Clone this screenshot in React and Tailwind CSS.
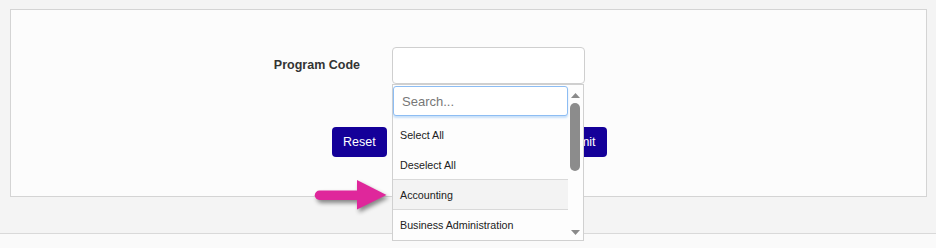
import React from 'react';

const options = [
  { label: 'Select All', h: 'h-[30px]' },
  { label: 'Deselect All', h: 'h-[31px] border-b border-[#d9d9d9]' },
  { label: 'Accounting', h: 'h-[30px] border-b border-[#d9d9d9] bg-[#f3f3f3]' },
  { label: 'Business Administration', h: 'h-[29px]' },
];

export default function App() {
  return (
    <div className="relative w-[936px] h-[248px] overflow-hidden bg-[#f4f4f4] font-['Liberation_Sans',Arial,sans-serif] text-[#333]">
      <div className="pt-[9px] pl-[10px]">
        {/* Form panel */}
        <div className="w-[917px] h-[188px] border border-[#d4d4d4] bg-[#fcfcfc]">
          <div className="flex items-center pt-[37px]">
            <label className="ml-[229px] w-[120px] text-right text-[12.5px] font-bold">Program Code</label>
            <div className="relative ml-[32px]">
              <div className="w-[193px] h-[37px] border border-[#cfcfcf] rounded-[4px] bg-white" />

              {/* Dropdown */}
              <div className="absolute left-0 top-full z-10 flex w-[192px] h-[157px] border border-[#d0d0d0] bg-[#fdfdfd]">
                <div className="w-[175px] pt-[1px]">
                  <input
                    placeholder="Search..."
                    className="block w-[175px] h-[30px] px-[8px] rounded-[3px] border border-[#8dbdf3] bg-white text-[13px] outline-none placeholder:text-[#777] shadow-[0_2px_2px_rgba(140,190,245,0.45)]"
                  />
                  <div className="mt-[3px]">
                    {options.map((o) => (
                      <div key={o.label} className={`flex items-center pt-[2px] pl-[7px] text-[10.7px] text-[#222] ${o.h}`}>
                        {o.label}
                      </div>
                    ))}
                  </div>
                </div>
                {/* Scrollbar */}
                <div className="relative flex-1">
                  <svg className="absolute left-[3px] top-[8px]" width="9" height="5" viewBox="0 0 9 5">
                    <path d="M0 5 L4.5 0 L9 5 Z" fill="#8a8a8a" />
                  </svg>
                  <div className="absolute left-[2px] top-[18px] w-[10px] h-[68px] rounded-full bg-[#8c8c8c]" />
                  <svg className="absolute left-[3px] bottom-[5px]" width="9" height="5" viewBox="0 0 9 5">
                    <path d="M0 0 L9 0 L4.5 5 Z" fill="#8a8a8a" />
                  </svg>
                </div>
              </div>
            </div>
          </div>

          <div className="flex mt-[43px]">
            <button className="ml-[321px] h-[30px] px-[11px] rounded-[4px] bg-[#140099] text-white text-[12.5px]">Reset</button>
            <button className="ml-[159px] h-[30px] px-[11px] rounded-[4px] bg-[#140099] text-white text-[12.5px]">Submit</button>
          </div>
        </div>
      </div>

      <div className="mt-[36px] h-[20px] border-t border-[#d9d9d9] bg-[#fafafa]" />

      {/* Pointer arrow */}
      <svg
        className="absolute left-[312px] top-[177px] drop-shadow-[2px_3px_2px_rgba(0,0,0,0.45)]"
        width="80"
        height="36"
        viewBox="0 0 80 36"
      >
        <path d="M7.5 13.5 H46 V23 H7.5 A4.75 4.75 0 0 1 7.5 13.5 Z" fill="#df279b" />
        <path d="M45 3 L74.5 18 L45 32.5 Z" fill="#df279b" />
      </svg>
    </div>
  );
}
